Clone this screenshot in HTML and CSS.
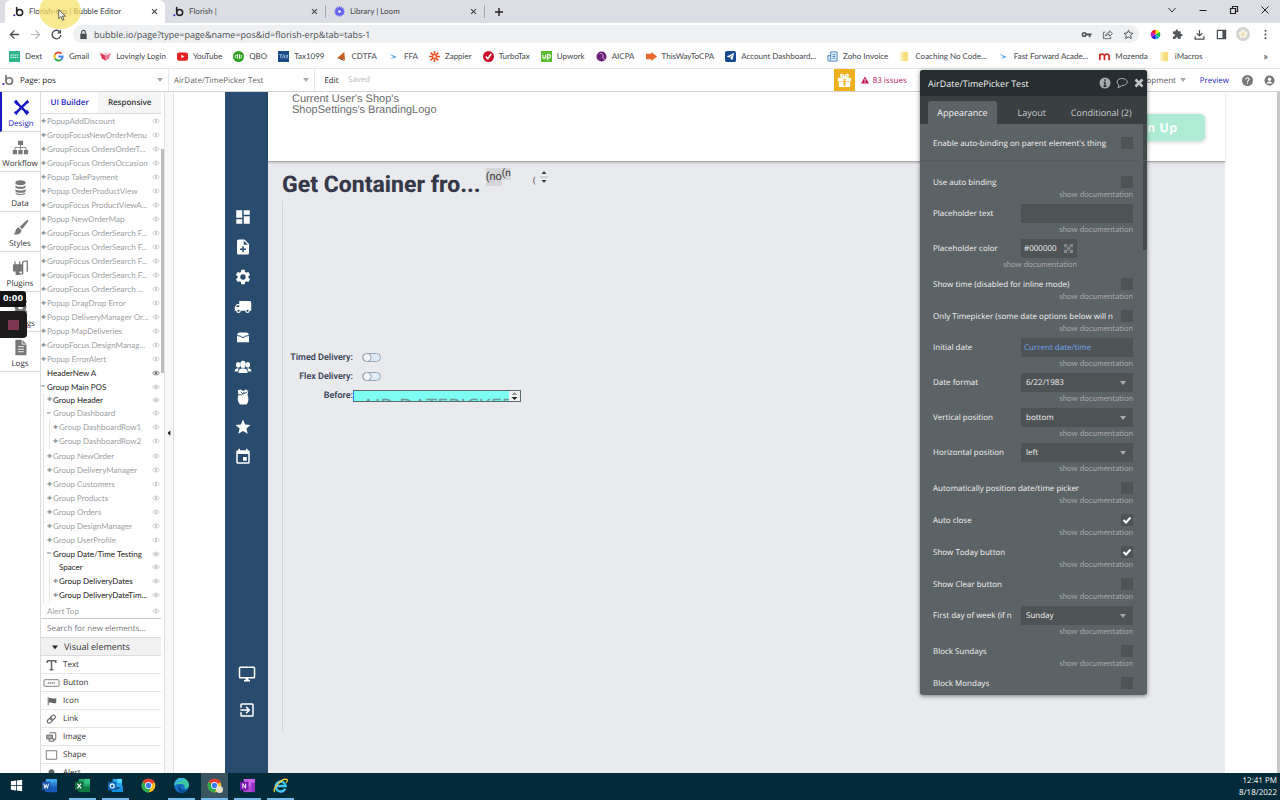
FILE: index.html
```html
<!DOCTYPE html>
<html lang="en">
<head>
    <meta charset="UTF-8">
    <meta name="viewport" content="width=device-width, initial-scale=1.0">
    <title>Florish-erp | Bubble Editor</title>
    <link rel="stylesheet" href="styles.css">
</head>
<body>
    <!-- Shared icons -->
    <svg class="sprite" aria-hidden="true">
        <symbol id="i-bubble" viewBox="0 0 24 24"><path d="M8 2v12" fill="none" stroke="currentColor" stroke-width="3.4"/><circle cx="14.500" cy="14" r="6.500" fill="none" stroke="currentColor" stroke-width="3.400"/><circle cx="3" cy="20" r="2.200" class="dot"/></symbol>
        <symbol id="i-x" viewBox="0 0 10 10"><path d="M1.500 1.500l7 7M8.500 1.500l-7 7" stroke="currentColor" stroke-width="1.600"/></symbol>
        <symbol id="i-eye" viewBox="0 0 16 12"><path d="M1 6c3-5 11-5 14 0-3 5-11 5-14 0z" fill="none" stroke="currentColor" stroke-width="1.500"/><circle cx="8" cy="6" r="3" fill="currentColor"/></symbol>
        <symbol id="i-hidden" viewBox="0 0 16 12"><path d="M1 6c3-5 11-5 14 0-3 5-11 5-14 0zM10 1L6 11" fill="none" stroke="currentColor" stroke-width="1.500"/><circle cx="8" cy="6" r="2" fill="currentColor"/></symbol>
        <symbol id="i-swoosh" viewBox="0 0 12 12"><path d="M1 3l9 3.500-8 2.500 4-2.500z" fill="#5aa9dc"/></symbol>
        <symbol id="i-folder" viewBox="0 0 12 12"><path d="M2 1h8v10H2z" fill="#f8dd7c"/><path d="M2 1h3v10H2z" fill="#fbe9a6"/></symbol>
        <symbol id="i-chrome" viewBox="0 0 24 24"><circle cx="12" cy="12" r="11" fill="#fbc116"/><path d="M12 12L2.500 6.500A11 11 0 0 1 21.500 6.500z" fill="#e33b2e"/><path d="M12 12L2.500 6.500A11 11 0 0 0 12 23l4-7z" fill="#2da94f"/><path d="M7 6.500h14.500L12 12z" fill="#e33b2e"/><circle cx="12" cy="12" r="5.500" fill="#fff"/><circle cx="12" cy="12" r="4.300" fill="#3b7de9"/></symbol>
    </svg>

    <div class="tabstrip">
        <div class="tab active">
            <svg class="tab-icon bubble"><use href="#i-bubble"/></svg>
            <span class="tab-title">Florish-erp | Bubble Editor</span>
            <button class="tab-close" aria-label="Close tab"><svg><use href="#i-x"/></svg></button>
        </div>
        <div class="tab">
            <svg class="tab-icon bubble"><use href="#i-bubble"/></svg>
            <span class="tab-title">Florish |</span>
            <button class="tab-close" aria-label="Close tab"><svg><use href="#i-x"/></svg></button>
        </div>
        <div class="tab divided">
            <svg class="tab-icon" viewBox="0 0 24 24"><g stroke="#625df5" stroke-width="4"><path d="M12 1v22M1 12h22M4.200 4.200l15.600 15.600M19.800 4.200L4.200 19.800M7.800 1.800l8.400 20.400M16.200 1.800L7.800 22.200M1.800 7.800l20.400 8.400M1.800 16.200l20.400-8.400" stroke-width="2.600"/></g><circle cx="12" cy="12" r="6.500" fill="#625df5"/><circle cx="12" cy="12" r="3.500" fill="#dcdee3"/></svg>
            <span class="tab-title">Library | Loom</span>
            <button class="tab-close" aria-label="Close tab"><svg><use href="#i-x"/></svg></button>
        </div>
        <button class="new-tab" aria-label="New tab"><svg viewBox="0 0 10 10"><path d="M5 1v8M1 5h8" stroke="#222" stroke-width="1.400"/></svg></button>
        <div class="window-controls">
            <button aria-label="Search tabs"><svg viewBox="0 0 10 10"><path d="M1.500 3L5 7l3.500-4" fill="none" stroke="#333"/></svg></button>
            <button aria-label="Minimize"><svg viewBox="0 0 10 10"><path d="M1.500 5.500h7" stroke="#222"/></svg></button>
            <button aria-label="Restore"><svg viewBox="0 0 10 10"><path d="M1.500 3.500h5v5h-5zM3.500 3V1.500h5v5H7" fill="none" stroke="#222" stroke-width="1.200"/></svg></button>
            <button aria-label="Close window"><svg viewBox="0 0 10 10"><path d="M1.500 1.500l7 7M8.500 1.500l-7 7" stroke="#222"/></svg></button>
        </div>
    </div>

    <div class="toolbar">
        <div class="nav-buttons">
            <button aria-label="Back"><svg viewBox="0 0 12 12"><path d="M11 6H2M6 1.500L1.500 6 6 10.500" fill="none" stroke="#4a4d51" stroke-width="1.400"/></svg></button>
            <button aria-label="Forward"><svg viewBox="0 0 12 12"><path d="M1 6h9M6 1.500L10.500 6 6 10.500" fill="none" stroke="#b4b7ba" stroke-width="1.300"/></svg></button>
            <button aria-label="Reload"><svg viewBox="0 0 12 12"><path d="M10 3.500A4.700 4.700 0 1 0 10.700 6.500" fill="none" stroke="#4a4d51" stroke-width="1.500"/><path d="M11 .5v4.500H6.500z" fill="#4a4d51"/></svg></button>
        </div>
        <div class="omnibox">
            <svg viewBox="0 0 12 12"><path d="M2.500 5h7v6h-7z" fill="#4a4d51"/><path d="M4 5V3.500a2 2 0 0 1 4 0V5" fill="none" stroke="#4a4d51" stroke-width="1.300"/></svg>
            <input class="url" type="text" aria-label="Address" value="bubble.io/page?type=page&amp;name=pos&amp;id=florish-erp&amp;tab=tabs-1">
            <button aria-label="Passwords"><svg viewBox="0 0 12 12"><circle cx="3.500" cy="6" r="2" fill="none" stroke="#4a4d51" stroke-width="1.600"/><path d="M5.500 5h6v1.800h-1.200V9H8.500V6.800h-3z" fill="#4a4d51"/></svg></button>
            <button aria-label="Share"><svg viewBox="0 0 12 12"><path d="M3.500 3.500H1.500v7h8V8.500M3.500 8c.5-3 2.500-4 4.500-4V2l3.500 3L8 8V6c-2 0-3.500.5-4.500 2z" fill="none" stroke="#5f6368"/></svg></button>
            <button aria-label="Bookmark"><svg viewBox="0 0 12 12"><path d="M6 1.200l1.400 3.200 3.500.3-2.600 2.300.8 3.400L6 8.600l-3.100 1.800.8-3.400L1.100 4.700l3.500-.3z" fill="none" stroke="#4a4d51"/></svg></button>
        </div>
        <div class="extensions">
            <button aria-label="Color picker"><svg viewBox="0 0 12 12"><path d="M6 6V.8A5.200 5.200 0 0 1 10.500 3.400z" fill="#ffe600"/><path d="M6 6l4.500-2.600a5.200 5.200 0 0 1 0 5.200z" fill="#15c13a"/><path d="M6 6l4.500 2.600A5.200 5.200 0 0 1 6 11.200z" fill="#12a6dc"/><path d="M6 6v5.200a5.200 5.200 0 0 1-4.500-2.600z" fill="#1b1be0"/><path d="M6 6L1.500 8.600a5.200 5.200 0 0 1 0-5.200z" fill="#d213c5"/><path d="M6 6L1.500 3.400A5.200 5.200 0 0 1 6 .8z" fill="#f01818"/></svg></button>
            <button aria-label="Extensions"><svg viewBox="0 0 24 24"><path d="M20.500 11H19V7c0-1.100-.9-2-2-2h-4V3.500a2.500 2.500 0 0 0-5 0V5H4c-1.100 0-2 .9-2 2v3.800h1.500a2.700 2.700 0 0 1 0 5.400H2V20c0 1.100.9 2 2 2h3.800v-1.500a2.700 2.700 0 0 1 5.400 0V22H17c1.100 0 2-.9 2-2v-4h1.500a2.500 2.500 0 0 0 0-5z" fill="#55585c"/></svg></button>
            <button aria-label="Downloads"><svg viewBox="0 0 12 12"><path d="M6 1v6M3 4.500L6 7.500l3-3M1.200 8v3h9.600V8" fill="none" stroke="#4a4d51" stroke-width="1.300"/></svg></button>
            <button aria-label="Side panel"><svg viewBox="0 0 12 12"><path d="M1.500 1.500h9v9h-9z" fill="none" stroke="#4a4d51" stroke-width="1.300"/><path d="M7 1.500h3.500v9H7z" fill="#4a4d51"/></svg></button>
            <button class="avatar" aria-label="Profile"><svg viewBox="0 0 14 14"><circle cx="7" cy="7" r="7" fill="#d3d3cf"/><g fill="#f5f2e2"><circle cx="7" cy="4.500" r="2"/><circle cx="4.500" cy="6.500" r="2"/><circle cx="9.500" cy="6.500" r="2"/><circle cx="5.500" cy="9" r="2"/><circle cx="8.500" cy="9" r="2"/></g><circle cx="7" cy="7" r="1.500" fill="#ead98c"/></svg></button>
            <button aria-label="Menu"><svg viewBox="0 0 12 12" fill="#4a4d51"><circle cx="6" cy="2" r="1.100"/><circle cx="6" cy="6" r="1.100"/><circle cx="6" cy="10" r="1.100"/></svg></button>
        </div>
    </div>

    <nav class="bookmarks">
        <a href="#"><svg viewBox="0 0 12 12"><path d="M0 0h12v12H0z" fill="#2cb68a"/><path d="M1.500 4.500h9M1.500 7h9" stroke="#d9f5ea" stroke-width="1.200" stroke-dasharray="1.500 .8"/></svg>Dext</a>
        <a href="#"><svg viewBox="0 0 12 12" fill="none" stroke-width="2"><path d="M9.500 3A4.500 4.500 0 0 0 2.200 3.800" stroke="#ea4335"/><path d="M2.200 3.800a4.500 4.500 0 0 0 0 4.400" stroke="#fbbc05"/><path d="M2.200 8.200A4.500 4.500 0 0 0 9 9.400" stroke="#34a853"/><path d="M9 9.400A4.500 4.500 0 0 0 10.500 6H6" stroke="#4285f4"/></svg>Gmail</a>
        <a href="#"><svg viewBox="0 0 12 12"><path d="M0 2l6 3v6L2 8z" fill="#e3355c"/><path d="M12 2L6 5v6l4-3z" fill="#f07a94"/><path d="M3 1l3 1.500L9 1 6 5z" fill="#f7b5c3"/></svg>Lovingly Login</a>
        <a href="#"><svg viewBox="0 0 12 12"><rect y="1.500" width="12" height="9" rx="2.400" fill="#e81f1f"/><path d="M4.700 4l3.500 2-3.500 2z" fill="#fff"/></svg>YouTube</a>
        <a href="#"><svg viewBox="0 0 12 12"><circle cx="6" cy="6" r="6" fill="#2ca01c"/><path d="M5 3.500v5M7 3.500v5M5 4.500H4a1.500 1.500 0 0 0 0 3M7 7.500h1a1.500 1.500 0 0 0 0-3" fill="none" stroke="#fff"/></svg>QBO</a>
        <a href="#"><svg viewBox="0 0 12 12"><path d="M0 0h12v12H0z" fill="#1b4a86"/><path d="M1.500 4h3M3 4v4M5 8l1.200-4L7.500 8M8.500 4L11 8M11 4L8.500 8" stroke="#9fc0e6" fill="none"/></svg>Tax1099</a>
        <a href="#"><svg viewBox="0 0 12 12"><path d="M1 8l8-7 1 10-3-3z" fill="#c8601f"/><path d="M2 8l5 0 2 3z" fill="#7d2e12"/></svg>CDTFA</a>
        <a href="#"><svg><use href="#i-swoosh"/></svg>FFA</a>
        <a href="#"><svg viewBox="0 0 12 12"><path d="M6 0v12M0 6h12M1.800 1.800l8.400 8.400M10.200 1.800l-8.400 8.400" stroke="#f04e23" stroke-width="1.800"/><circle cx="6" cy="6" r="1.300" fill="#fff"/></svg>Zappier</a>
        <a href="#"><svg viewBox="0 0 12 12"><circle cx="6" cy="6" r="6" fill="#c8102e"/><path d="M3 6l2.300 2.500L9 3" fill="none" stroke="#fff" stroke-width="1.700"/></svg>TurboTax</a>
        <a href="#"><svg viewBox="0 0 12 12"><path d="M0 0h12v12H0z" fill="#5bbc2f"/><path d="M2 4v2.500a1.500 1.500 0 0 0 3 0V4M7 10V4h1.500a1.500 1.500 0 0 1 0 3.500H7" fill="none" stroke="#fff" stroke-width="1.200"/></svg>Upwork</a>
        <a href="#"><svg viewBox="0 0 12 12"><circle cx="6" cy="6" r="5.500" fill="#6d2077"/><path d="M4 3c3-1 5 2 3 4M7 7l4 3.500" fill="none" stroke="#d7b6dd"/></svg>AICPA</a>
        <a href="#"><svg viewBox="0 0 12 12"><path d="M0 3h6V1l6 5-6 5V9H0z" fill="#e8692b"/></svg>ThisWayToCPA</a>
        <a href="#"><svg viewBox="0 0 12 12"><rect width="12" height="12" rx="2" fill="#174a8f"/><path d="M2 6l8-4-2 8-2.500-2.500L9 3.500 4.500 7z" fill="#fff"/></svg>Account Dashboard...</a>
        <a href="#"><svg viewBox="0 0 12 12"><path d="M4 1h7v10H2a1 1 0 0 1-1-1V5h3z" fill="#e3effa" stroke="#3b7dc0"/><path d="M4 5v5M6 4h3M6 6h3M6 8h3" stroke="#3b7dc0"/></svg>Zoho Invoice</a>
        <a href="#"><svg><use href="#i-folder"/></svg>Coaching No Code...</a>
        <a href="#"><svg><use href="#i-swoosh"/></svg>Fast Forward Acade...</a>
        <a href="#"><svg viewBox="0 0 12 12"><path d="M1 10V3M1 6q0-2.500 2.500-2.500T6 6v4M6 6q0-2.500 2.500-2.500T11 6v4" fill="none" stroke="#cf2f27" stroke-width="1.900"/></svg>Mozenda</a>
        <a href="#"><svg><use href="#i-folder"/></svg>iMacros</a>
        <button class="more" aria-label="More bookmarks">»</button>
    </nav>

    <header class="editor-bar">
        <div class="page-picker">
            <svg class="logo"><use href="#i-bubble"/></svg>
            <select aria-label="Page"><option>Page: pos</option></select>
        </div>
        <div class="element-picker">
            <select aria-label="Element"><option>AirDate/TimePicker Test</option></select>
        </div>
        <button class="edit">Edit</button>
        <span class="saved">Saved</span>
        <button class="gift" aria-label="What's new"><svg viewBox="0 0 16 16" fill="#fff"><path d="M1 5h14v4H1zM2 9.500h12V15H2z"/><path d="M8 5C4 5 3 1.500 5 1.500S8 5 8 5s1-3.500 3-3.500S12 5 8 5z" fill="none" stroke="#fff" stroke-width="1.500"/><path d="M7 6h2v8H7z" fill="#efb020"/></svg></button>
        <a class="issues" href="#"><svg viewBox="0 0 10 10"><path d="M5 .5L10 9.500H0z" fill="#c2185b"/><path d="M5 3.500v3M5 7.200v1.200" stroke="#fff" stroke-width="1.200"/></svg>83 issues</a>
        <div class="editor-right">
            <select class="version" aria-label="Version"><option>Development</option></select>
            <a class="preview" href="#">Preview</a>
            <button aria-label="Help"><svg viewBox="0 0 12 12"><circle cx="6" cy="6" r="6" fill="#777"/><path d="M4.200 4.800c0-2.400 3.700-2.300 3.600-.2C7.800 6 6 5.800 6 7.300M6 8.200v1.300" fill="none" stroke="#fff" stroke-width="1.200"/></svg></button>
            <button aria-label="Account"><svg viewBox="0 0 12 12"><circle cx="6" cy="6" r="5.500" fill="#777"/><circle cx="6" cy="4.600" r="1.900" fill="#fff"/><path d="M2.800 9.300c.5-2.800 5.900-2.800 6.400 0z" fill="#fff"/></svg></button>
        </div>
    </header>

    <main class="workspace">
        <nav class="side-nav">
            <a class="current" href="#"><svg viewBox="0 0 20 20"><path d="M3 3l14 14M17 3L3 17" stroke="currentColor" stroke-width="3"/><path d="M1 3l3-2 3 4-3 2zM13 15l4-2 2 3-3 3zM1 16l3 3 2-3-3-2zM14 4l3-3 2 3-3 2z" fill="currentColor"/></svg>Design</a>
            <a href="#"><svg viewBox="0 0 20 20"><path d="M7 2h6v5H7zM1 13h5v5H1zM7.500 13h5v5h-5zM14 13h5v5h-5z" fill="currentColor"/><path d="M10 7v6M3.500 13v-3h13v3" fill="none" stroke="currentColor"/></svg>Workflow</a>
            <a href="#"><svg viewBox="0 0 20 20" fill="currentColor"><path d="M4 4c0-3.500 12-3.500 12 0v1c0 3-12 3-12 0zM4 7.500c2 2 10 2 12 0v2c0 3-12 3-12 0zM4 12c2 2 10 2 12 0v2c0 3-12 3-12 0zM4 16c2 2 10 2 12 0v.5c0 3-12 3-12 0z"/></svg>Data</a>
            <a href="#"><svg viewBox="0 0 20 20" fill="currentColor"><path d="M18 1c1 0 1.500 1 1 2l-7 9-3-3zM8 10l3.200 3.200C11 17 7 19 2 18c2-1 1.500-2.500 2.500-5C5.200 11 6.500 10 8 10z"/></svg>Styles</a>
            <a href="#"><svg viewBox="0 0 20 20"><path d="M2 7h9v7H2zM3.500 3v4M9 3v4M5 14h3v4H5z" fill="currentColor" stroke="currentColor" stroke-width="1.500"/><path d="M6.500 17.500h6V5q0-2.500 3-2.500H18v12.500" fill="none" stroke="currentColor" stroke-width="1.500"/></svg>Plugins</a>
            <a href="#"><svg viewBox="0 0 20 20"><circle cx="10" cy="9" r="5" fill="none" stroke="currentColor" stroke-width="4"/><path d="M3 2l3 3M17 2l-3 3M3 16l3-3M17 16l-3-3" stroke="currentColor" stroke-width="3"/></svg>Settings</a>
            <a href="#"><svg viewBox="0 0 20 20"><path d="M4 1h8l5 5v13H4z" fill="currentColor"/><path d="M12 1v5h5M7 9h7M7 12h7M7 15h7" fill="none" stroke="#fff"/></svg>Logs</a>
        </nav>

        <aside class="elements">
            <div class="mode-tabs">
                <button class="on">UI Builder</button>
                <button>Responsive</button>
            </div>
            <ul class="tree">
                <li><div class="node"><i>✚</i><span>PopupAddDiscount</span><svg><use href="#i-hidden"/></svg></div></li>
                <li><div class="node"><i>✚</i><span>GroupFocusNewOrderMenu</span><svg><use href="#i-hidden"/></svg></div></li>
                <li><div class="node"><i>✚</i><span>GroupFocus OrdersOrderT...</span><svg><use href="#i-hidden"/></svg></div></li>
                <li><div class="node"><i>✚</i><span>GroupFocus OrdersOccasion</span><svg><use href="#i-hidden"/></svg></div></li>
                <li><div class="node"><i>✚</i><span>Popup TakePayment</span><svg><use href="#i-hidden"/></svg></div></li>
                <li><div class="node"><i>✚</i><span>Popup OrderProductView</span><svg><use href="#i-hidden"/></svg></div></li>
                <li><div class="node"><i>✚</i><span>GroupFocus ProductViewA...</span><svg><use href="#i-hidden"/></svg></div></li>
                <li><div class="node"><i>✚</i><span>Popup NewOrderMap</span><svg><use href="#i-hidden"/></svg></div></li>
                <li><div class="node"><i>✚</i><span>GroupFocus OrderSearch F...</span><svg><use href="#i-hidden"/></svg></div></li>
                <li><div class="node"><i>✚</i><span>GroupFocus OrderSearch F...</span><svg><use href="#i-hidden"/></svg></div></li>
                <li><div class="node"><i>✚</i><span>GroupFocus OrderSearch F...</span><svg><use href="#i-hidden"/></svg></div></li>
                <li><div class="node"><i>✚</i><span>GroupFocus OrderSearch F...</span><svg><use href="#i-hidden"/></svg></div></li>
                <li><div class="node"><i>✚</i><span>GroupFocus OrderSearch ...</span><svg><use href="#i-hidden"/></svg></div></li>
                <li><div class="node"><i>✚</i><span>Popup DragDrop Error</span><svg><use href="#i-hidden"/></svg></div></li>
                <li><div class="node"><i>✚</i><span>Popup DeliveryManager Or...</span><svg><use href="#i-hidden"/></svg></div></li>
                <li><div class="node"><i>✚</i><span>Popup MapDeliveries</span><svg><use href="#i-hidden"/></svg></div></li>
                <li><div class="node"><i>✚</i><span>GroupFocus DesignManag...</span><svg><use href="#i-hidden"/></svg></div></li>
                <li><div class="node"><i>✚</i><span>Popup ErrorAlert</span><svg><use href="#i-hidden"/></svg></div></li>
                <li><div class="node shown header-node"><i></i><span>HeaderNew A</span><svg><use href="#i-eye"/></svg></div></li>
                <li>
                    <div class="node shown"><i>━</i><span>Group Main POS</span><svg><use href="#i-eye"/></svg></div>
                    <ul>
                        <li><div class="node shown"><i>✚</i><span>Group Header</span><svg><use href="#i-eye"/></svg></div></li>
                        <li>
                            <div class="node"><i>━</i><span>Group Dashboard</span><svg><use href="#i-hidden"/></svg></div>
                            <ul>
                                <li><div class="node"><i>✚</i><span>Group DashboardRow1</span><svg><use href="#i-hidden"/></svg></div></li>
                                <li><div class="node"><i>✚</i><span>Group DashboardRow2</span><svg><use href="#i-hidden"/></svg></div></li>
                            </ul>
                        </li>
                        <li><div class="node"><i>✚</i><span>Group NewOrder</span><svg><use href="#i-hidden"/></svg></div></li>
                        <li><div class="node"><i>✚</i><span>Group DeliveryManager</span><svg><use href="#i-hidden"/></svg></div></li>
                        <li><div class="node"><i>✚</i><span>Group Customers</span><svg><use href="#i-hidden"/></svg></div></li>
                        <li><div class="node"><i>✚</i><span>Group Products</span><svg><use href="#i-hidden"/></svg></div></li>
                        <li><div class="node"><i>✚</i><span>Group Orders</span><svg><use href="#i-hidden"/></svg></div></li>
                        <li><div class="node"><i>✚</i><span>Group DesignManager</span><svg><use href="#i-hidden"/></svg></div></li>
                        <li><div class="node"><i>✚</i><span>Group UserProfile</span><svg><use href="#i-hidden"/></svg></div></li>
                        <li>
                            <div class="node shown"><i>━</i><span>Group Date/Time Testing</span><svg><use href="#i-eye"/></svg></div>
                            <ul>
                                <li><div class="node shown"><i></i><span>Spacer</span><svg><use href="#i-eye"/></svg></div></li>
                                <li><div class="node shown"><i>✚</i><span>Group DeliveryDates</span><svg><use href="#i-eye"/></svg></div></li>
                                <li><div class="node shown"><i>✚</i><span>Group DeliveryDateTim...</span><svg><use href="#i-eye"/></svg></div></li>
                            </ul>
                        </li>
                    </ul>
                </li>
                <li><div class="node"><i></i><span>Alert Top</span><svg><use href="#i-hidden"/></svg></div></li>
            </ul>
            <input class="search" type="text" aria-label="Search for new elements" placeholder="Search for new elements...">
            <button class="group-title"><svg viewBox="0 0 8 8"><path d="M0 2h8L4 7z" fill="#222"/></svg>Visual elements</button>
            <ul class="palette">
                <li><svg viewBox="0 0 18 12"><path d="M4.500 1.500h9v2.500M4.500 4V1.500M9 1.500v9.500M7 11h4" fill="none" stroke="#666" stroke-width="1.600"/></svg>Text</li>
                <li><svg viewBox="0 0 18 12"><rect x="1" y="2.500" width="16" height="7" rx="1" fill="none" stroke="#777"/><path d="M5 6h8" stroke="#888" stroke-width="1.500" stroke-dasharray="1.500 .5"/></svg>Button</li>
                <li><svg viewBox="0 0 18 12"><path d="M5.500 2v8.500" stroke="#666"/><path d="M6 3c2-1 4 1 8 0v5c-4 1-6-1-8 0z" fill="#666"/></svg>Icon</li>
                <li><svg viewBox="0 0 18 12"><g fill="none" stroke="#666" stroke-width="1.200" transform="rotate(-45 9 6)"><rect x="3.500" y="4" width="6" height="4" rx="2"/><rect x="8" y="4" width="6" height="4" rx="2"/></g></svg>Link</li>
                <li><svg viewBox="0 0 18 12"><path d="M7 1.500h6.500V8L11 10.500H6.500V8M11 10.500V8h2.500" fill="none" stroke="#666"/><path d="M4 4h6v4H4z" fill="#aaa" stroke="#666"/></svg>Image</li>
                <li><svg viewBox="0 0 18 12"><path d="M3.500 1.500h11v9h-11z" fill="none" stroke="#777"/></svg>Shape</li>
                <li><svg viewBox="0 0 18 12"><path d="M6 10V5a3 3 0 0 1 6 0v5z" fill="#666"/></svg>Alert</li>
            </ul>
        </aside>
        <div class="tree-scroll"></div>
        <button class="collapse" aria-label="Collapse panel"><svg viewBox="0 0 6 8"><path d="M5 0v8L1 4z" fill="#111"/></svg></button>

        <section class="canvas">
            <nav class="app-nav">
                <a href="#" aria-label="Dashboard"><svg viewBox="0 0 24 24"><path d="M3 13h8V3H3zm0 8h8v-6H3zm10 0h8V11h-8zm0-18v6h8V3z"/></svg></a>
                <a href="#" aria-label="New order"><svg viewBox="0 0 24 24"><path d="M14 2H6a2 2 0 0 0-2 2v16a2 2 0 0 0 2 2h12a2 2 0 0 0 2-2V8zm2 14h-3v3h-2v-3H8v-2h3v-3h2v3h3zm-3-7V3.500L18.500 9z"/></svg></a>
                <a href="#" aria-label="Settings"><svg viewBox="0 0 24 24"><path d="M19.140 12.940c.04-.3.06-.61.06-.94s-.02-.64-.07-.94l2.030-1.580a.49.49 0 0 0 .12-.61l-1.920-3.320a.49.49 0 0 0-.59-.22l-2.390.96a7 7 0 0 0-1.620-.94l-.36-2.540a.48.48 0 0 0-.48-.41h-3.840a.48.48 0 0 0-.47.41l-.36 2.540a7.200 7.200 0 0 0-1.620.94l-2.390-.96a.48.48 0 0 0-.59.22L2.740 8.870a.48.48 0 0 0 .12.61l2.030 1.580a6 6 0 0 0 0 1.880l-2.030 1.580a.49.49 0 0 0-.12.610l1.920 3.320c.12.22.37.29.59.22l2.390-.96c.5.38 1.030.7 1.620.94l.36 2.540c.05.24.24.41.48.41h3.840c.24 0 .44-.17.47-.41l.36-2.540a7 7 0 0 0 1.620-.94l2.390.96c.22.08.47 0 .59-.22l1.920-3.320a.48.48 0 0 0-.12-.61zM12 15.600a3.600 3.600 0 1 1 0-7.200 3.600 3.600 0 0 1 0 7.200z"/></svg></a>
                <a href="#" aria-label="Deliveries"><svg viewBox="0 0 24 24"><g transform="translate(24 0) scale(-1 1)"><path d="M20 8h-3V4H3a2 2 0 0 0-2 2v11h2a3 3 0 0 0 6 0h6a3 3 0 0 0 6 0h2v-5zM6 18.500a1.500 1.500 0 1 1 0-3 1.500 1.500 0 0 1 0 3zm13.500-9l1.960 2.500H17V9.500zM18 18.500a1.500 1.500 0 1 1 0-3 1.500 1.500 0 0 1 0 3z"/></g></svg></a>
                <a href="#" aria-label="Messages"><svg viewBox="0 0 24 24"><path d="M4 9q1-3 4-3h8q3 0 4 3v10H4z"/><path d="M4 10l5 1 3 2 3-2 5-1" fill="none" stroke="#294b6d" stroke-width="1.300"/></svg></a>
                <a href="#" aria-label="Customers"><svg viewBox="0 0 24 24"><ellipse cx="12" cy="8.500" rx="3.700" ry="4.700"/><ellipse cx="5.500" cy="9" rx="2.800" ry="3.800"/><ellipse cx="18.500" cy="9" rx="2.800" ry="3.800"/><path d="M6 20v-3q0-2 4-3h4q4 1 4 3v3zM1 18v-2q0-2 4-2.500l1.500.5Q5 15 5 18zM23 18v-2q0-2-4-2.500l-1.500.5q1.500 1 1.500 4z"/></svg></a>
                <a href="#" aria-label="Products"><svg viewBox="0 0 24 24"><path d="M5 3l4-1 3 2 4-2 3 2-1 5H6zM6 9h12q3 7-1 13H8Q3 16 6 9z"/><path d="M6 9q5 2 8-4M9 5l3 3 6-3" fill="none" stroke="#294b6d" stroke-width="1.200"/></svg></a>
                <a href="#" aria-label="Favorites"><svg viewBox="0 0 24 24"><path d="M12 17.300L18.200 21l-1.600-7L22 9.200l-7.200-.6L12 2 9.200 8.600 2 9.200 7.500 14l-1.700 7z"/></svg></a>
                <a href="#" aria-label="Calendar"><svg viewBox="0 0 24 24"><path d="M17 12h-5v5h5zM16 1v2H8V1H6v2H5a2 2 0 0 0-2 2v14a2 2 0 0 0 2 2h14a2 2 0 0 0 2-2V5a2 2 0 0 0-2-2h-1V1zm3 18H5V8h14z"/></svg></a>
                <a class="lower" href="#" aria-label="Display"><svg viewBox="0 0 24 24"><path d="M21 2H3a2 2 0 0 0-2 2v12a2 2 0 0 0 2 2h7v2H8v2h8v-2h-2v-2h7a2 2 0 0 0 2-2V4a2 2 0 0 0-2-2zm0 14H3V4h18z"/></svg></a>
                <a href="#" aria-label="Log out"><svg viewBox="0 0 24 24"><path d="M10.100 15.600L11.500 17l5-5-5-5-1.400 1.400 2.600 2.600H3v2h9.700zM19 3H5a2 2 0 0 0-2 2v4h2V5h14v14H5v-4H3v4a2 2 0 0 0 2 2h14a2 2 0 0 0 2-2V5a2 2 0 0 0-2-2z"/></svg></a>
            </nav>
            <div class="page">
                <div class="page-header">
                    <p>Current User's Shop's<br>ShopSettings's BrandingLogo</p>
                    <button class="sign-up">Sign Up</button>
                </div>
                <div class="title-row">
                    <h1>Get Container fro...</h1>
                    <span class="chip">(no</span><span class="chip small">(n</span>
                    <span class="brace">(</span>
                    <svg viewBox="0 0 10 16"><path d="M2.500 5L5 2l2.500 3zM2.500 11L5 14l2.500-3z" fill="#444"/><path d="M1 8h8" stroke="#bbb"/></svg>
                </div>
                <div class="date-group">
                    <label for="timed">Timed Delivery:</label>
                    <input class="toggle" type="checkbox" id="timed">
                    <label for="flex">Flex Delivery:</label>
                    <input class="toggle" type="checkbox" id="flex">
                    <label for="before">Before:</label>
                    <div class="picker">
                        <input type="text" id="before" value="AIR-DATEPICKER">
                        <svg viewBox="0 0 10 10"><path d="M2 4l3-3 3 3z" fill="#999"/><path d="M2 6h6L5 9z" fill="#222"/></svg>
                    </div>
                </div>
            </div>
        </section>
        <div class="canvas-scroll"></div>
    </main>

    <!-- Property editor, floats over the canvas -->
    <section class="inspector">
        <div class="inspector-head">
            <h2>AirDate/TimePicker Test</h2>
            <button aria-label="Info"><svg viewBox="0 0 12 12"><circle cx="6" cy="6" r="5.500" fill="#a9acad"/><path d="M6 2.300v1.700M4.700 5.500H6v3.500M4.500 9.300h3" fill="none" stroke="#272e31" stroke-width="1.400"/></svg></button>
            <button aria-label="Comment"><svg viewBox="0 0 12 12"><path d="M6 1.500c7 0 7 7 0 7L2 11l1-3C-.5 6 1 1.500 6 1.500z" fill="none" stroke="#a9acad"/></svg></button>
            <button aria-label="Close"><svg viewBox="0 0 12 12"><path d="M2.500 2.500l7 7M9.500 2.500l-7 7" stroke="#c2c4c5" stroke-width="2.600"/></svg></button>
        </div>
        <div class="inspector-tabs">
            <button class="on">Appearance</button>
            <button>Layout</button>
            <button>Conditional (2)</button>
        </div>
        <div class="inspector-body">
            <div class="field check binding"><label for="f0">Enable auto-binding on parent element's thing</label><input type="checkbox" id="f0"></div>
            <div class="field check"><label for="f1">Use auto binding</label><input type="checkbox" id="f1"><a href="#">show documentation</a></div>
            <div class="field"><label for="f2">Placeholder text</label><input type="text" id="f2"><a href="#">show documentation</a></div>
            <div class="field color"><label for="f3">Placeholder color</label><div class="swatch"><input type="text" id="f3" value="#000000"><svg viewBox="0 0 9 9"><path d="M0 0h9v9H0z" fill="#858889"/><path d="M3 0h3v3H3zM0 3h3v3H0zM6 3h3v3H6zM3 6h3v3H3z" fill="#5b5e60"/></svg></div><a href="#">show documentation</a></div>
            <div class="field check"><label for="f4">Show time (disabled for inline mode)</label><input type="checkbox" id="f4"><a href="#">show documentation</a></div>
            <div class="field check"><label for="f5">Only Timepicker (some date options below will n</label><input type="checkbox" id="f5"><a href="#">show documentation</a></div>
            <div class="field"><label for="f6">Initial date</label><input class="expression" type="text" id="f6" value="Current date/time"><a href="#">show documentation</a></div>
            <div class="field"><label for="f7">Date format</label><select id="f7"><option>6/22/1983</option></select><a href="#">show documentation</a></div>
            <div class="field"><label for="f8">Vertical position</label><select id="f8"><option>bottom</option></select><a href="#">show documentation</a></div>
            <div class="field"><label for="f9">Horizontal position</label><select id="f9"><option>left</option></select><a href="#">show documentation</a></div>
            <div class="field check"><label for="f10">Automatically position date/time picker</label><input type="checkbox" id="f10"><a href="#">show documentation</a></div>
            <div class="field check"><label for="f11">Auto close</label><input type="checkbox" id="f11" checked><a href="#">show documentation</a></div>
            <div class="field check"><label for="f12">Show Today button</label><input type="checkbox" id="f12" checked><a href="#">show documentation</a></div>
            <div class="field check"><label for="f13">Show Clear button</label><input type="checkbox" id="f13"><a href="#">show documentation</a></div>
            <div class="field"><label for="f14">First day of week (if n</label><select id="f14"><option>Sunday</option></select><a href="#">show documentation</a></div>
            <div class="field check"><label for="f15">Block Sundays</label><input type="checkbox" id="f15"><a href="#">show documentation</a></div>
            <div class="field check"><label for="f16">Block Mondays</label><input type="checkbox" id="f16"></div>
        </div>
    </section>

    <!-- Screen recorder controls -->
    <div class="recorder">
        <span class="timer">0:00</span>
        <button aria-label="Stop recording"><span></span></button>
    </div>
    <div class="pointer">
        <svg viewBox="0 0 12 16"><path d="M1 1v12l3-3 2 5 2-1-2-4.500h4z" fill="#fff" stroke="#333"/></svg>
    </div>

    <footer class="taskbar">
        <button aria-label="Start"><svg viewBox="0 0 16 16" fill="#fff"><path d="M2 3.500l5.500-.8v4.800H2zM8.300 2.600L14 1.800v5.700H8.300zM2 8.300h5.500v4.900L2 12.400zM8.300 8.300H14V14l-5.700-.8z"/></svg></button>
        <button aria-label="Word"><svg viewBox="0 0 16 16"><path d="M4 1h12v14H4z" fill="#41a5ee"/><path d="M4 5h12v10H4z" fill="#2b7cd3"/><path d="M4 9h12v6H4z" fill="#185abd"/><path d="M0 4h9v9H0z" fill="#1b51a8"/><path d="M2 6l1.200 5L4.500 7l1.300 4L7 6" fill="none" stroke="#fff"/></svg></button>
        <button class="open" aria-label="Excel"><svg viewBox="0 0 16 16"><path d="M4 1h12v14H4z" fill="#21a366"/><path d="M10 1h6v5h-6z" fill="#33c481"/><path d="M4 9h12v6H4z" fill="#107c41"/><path d="M0 4h9v9H0z" fill="#0f6b39"/><path d="M2.500 6l4 5M6.500 6l-4 5" stroke="#fff" stroke-width="1.200"/></svg></button>
        <button class="open" aria-label="Outlook"><svg viewBox="0 0 16 16"><path d="M5 1h10v9H5z" fill="#28a8ea"/><path d="M10 1h5v4h-5z" fill="#50d9ff"/><path d="M4 8l6 4 6-4v7H4z" fill="#1490df"/><path d="M0 4h9v9H0z" fill="#0f64b8"/><circle cx="4.500" cy="8.500" r="2.200" fill="none" stroke="#fff" stroke-width="1.200"/></svg></button>
        <button aria-label="Chrome"><svg><use href="#i-chrome"/></svg></button>
        <button class="open" aria-label="Edge"><svg viewBox="0 0 16 16"><circle cx="8" cy="8" r="8" fill="#1470c4"/><path d="M0 8a8 8 0 0 1 16-.5c0 3-2.500 4-5 3.500 1-2 0-4.500-3-4.500C4 6.500 1 7 0 8z" fill="#3cc9a0"/><path d="M1 5q2-5 7-5 3 0 5 1.800Q6 2 1 8z" fill="#35b4dc"/><path d="M7.500 7.500C5 10 8 14 14 12.500 12 15.500 9 16 7 15.500 3 13 4 8 7.500 7.500z" fill="#0b4c98"/></svg></button>
        <button class="open focused" aria-label="Chrome, recording"><svg><use href="#i-chrome"/></svg><b></b></button>
        <button class="open" aria-label="OneNote"><svg viewBox="0 0 16 16"><path d="M4 1h12v14H4z" fill="#ca64ea"/><path d="M12 5h4v10h-4z" fill="#9332bf"/><path d="M4 9h8v6H4z" fill="#ae4bd5"/><path d="M0 4h9v9H0z" fill="#7719aa"/><path d="M3 11V6l3 5V6" fill="none" stroke="#fff"/></svg></button>
        <button class="open" aria-label="Internet Explorer"><svg viewBox="0 0 16 16"><path d="M13 11.500A5.300 5.300 0 1 1 13.500 8.500H4" fill="none" stroke="#45c5f4" stroke-width="2.600"/><path d="M2 15C-1 12 9 0 14.500 1.500 16 2 15 4 14 5" fill="none" stroke="#f6d23b" stroke-width="1.400"/></svg></button>
        <div class="clock"><span>12:41 PM</span><span>8/18/2022</span></div>
    </footer>
</body>
</html>
```
FILE: styles.css
```css
:root {
    --ink: #333;
    --muted: #9ca1a3;
    --line: #dcdcdc;
    --accent: #1b1bc4;
    --navy: #294b6d;
    --panel: #5c6366;
    --panel-field: #4e5355;
    --ui: "Open Sans", "Noto Sans", sans-serif;
    --narrow: Lato, "Open Sans", sans-serif;
}

* {
    box-sizing: border-box;
}

body {
    margin: 0;
    height: 100vh;
    display: flex;
    flex-direction: column;
    overflow: hidden;
    position: relative;
    background: #fff;
    color: var(--ink);
    font-family: var(--ui);
    font-size: 8px;
    text-rendering: geometricPrecision;
}

button, input, select {
    font: inherit;
    color: inherit;
    border: none;
    background: none;
    padding: 0;
    margin: 0;
    appearance: none;
    border-radius: 0;
    outline: none;
    text-rendering: inherit;
}

button {
    display: flex;
    align-items: center;
    justify-content: center;
}

a {
    color: inherit;
    text-decoration: none;
}

ul {
    list-style: none;
    margin: 0;
    padding: 0;
}

svg {
    display: block;
    flex: none;
}

.sprite {
    position: absolute;
    width: 0;
    height: 0;
}

select {
    background: url("data:image/svg+xml,%3Csvg xmlns='http://www.w3.org/2000/svg' viewBox='0 0 6 4'%3E%3Cpath d='M0 0h6L3 4z' fill='%23aaa'/%3E%3C/svg%3E") no-repeat right 5px center / 6px 4px;
}

/* Browser tabs */
.tabstrip {
    display: flex;
    height: 23px;
    flex: none;
    padding-left: 5px;
    background: #dcdee3;
    font-family: var(--narrow);
}

.tab {
    display: flex;
    align-items: center;
    width: 160px;
    padding: 0 7px 1px 8px;
    gap: 5px;
    color: #45484c;
}

.tab.active {
    background: #fff;
    border-radius: 6px 6px 0 0;
}

.tab.divided {
    border-left: 1px solid #a5a8ad;
    border-right: 1px solid #a5a8ad;
    border-image: linear-gradient(transparent 25%, #a5a8ad 25%, #a5a8ad 75%, transparent 75%) 1;
}

.tab-icon {
    width: 11px;
    height: 11px;
}

.bubble {
    color: #222;
}

.dot {
    fill: #2a1bd0;
}

.tab-title {
    flex: 1;
    white-space: nowrap;
}

.tab-close svg {
    width: 7px;
    height: 7px;
}

.new-tab {
    width: 27px;
}

.new-tab svg {
    width: 10px;
    height: 10px;
}

.window-controls {
    display: flex;
    margin-left: auto;
    height: 19px;
}

.window-controls button {
    width: 31px;
}

.window-controls svg {
    width: 10px;
    height: 10px;
}

/* Address bar */
.toolbar {
    display: flex;
    align-items: center;
    height: 22px;
    flex: none;
}

.nav-buttons {
    display: flex;
    padding-left: 4px;
    width: 73px;
}

.nav-buttons button {
    width: 21px;
}

.nav-buttons svg, .omnibox svg, .extensions svg {
    width: 11px;
    height: 11px;
}

.omnibox {
    flex: 1;
    display: flex;
    align-items: center;
    height: 18px;
    padding: 0 0 0 5px;
    border-radius: 9px;
    background: #eef0f2;
}

.omnibox button {
    width: 21px;
}

.url {
    flex: 1;
    padding-left: 5px;
    font-size: 9px;
    color: #4b4f54;
}

.extensions {
    display: flex;
    padding: 0 4px 0 5px;
}

.extensions button {
    width: 22px;
}

.extensions .avatar svg {
    width: 14px;
    height: 14px;
}

/* Bookmarks */
.bookmarks {
    display: flex;
    align-items: center;
    gap: 11px;
    height: 23px;
    flex: none;
    padding: 0 12px 1px 9px;
    white-space: nowrap;
    color: #43474b;
    font-family: var(--narrow);
}

.bookmarks a {
    display: flex;
    align-items: center;
    gap: 5px;
}

.bookmarks svg {
    width: 11px;
    height: 11px;
}

.more {
    margin-left: auto;
    font-size: 11px;
}

/* Editor bar */
.editor-bar {
    display: flex;
    align-items: stretch;
    height: 24px;
    flex: none;
    border-top: 1px solid #e6e6e6;
    border-bottom: 1px solid #d5d5d5;
}

.page-picker {
    display: flex;
    align-items: center;
    width: 169px;
    padding-left: 2px;
    border-right: 1px solid #e8e8e8;
}

.page-picker select {
    flex: 1;
    height: 100%;
    padding-left: 6px;
    color: #222;
}

.logo {
    width: 12px;
    height: 14px;
    color: #777;
}

.element-picker {
    display: flex;
    width: 146px;
    padding-left: 5px;
    border-right: 1px solid #e8e8e8;
    color: #666;
}

.element-picker select {
    flex: 1;
}

.edit {
    width: 33px;
    color: #222;
}

.saved {
    color: #bbb;
    line-height: 22px;
    flex: 1;
}

.gift {
    width: 21px;
    background: #efb020;
}

.gift svg {
    width: 15px;
    height: 15px;
}

.issues {
    display: flex;
    align-items: center;
    gap: 4px;
    padding-left: 6px;
    color: #c2185b;
}

.issues svg {
    width: 8px;
    height: 8px;
}

.editor-right {
    display: flex;
    align-items: center;
    padding-left: 219px;
}

.editor-right button {
    width: 22px;
}

.editor-right button svg {
    width: 11px;
    height: 11px;
}

.version {
    width: 62px;
    background-position: right 2px center;
    color: #555;
}

.preview {
    padding: 0 7px 0 12px;
    color: var(--accent);
}

/* Workspace */
.workspace {
    flex: 1;
    min-height: 0;
    display: flex;
}

.side-nav {
    width: 41px;
    flex: none;
    border-right: 1px solid var(--line);
}

.side-nav a {
    display: flex;
    flex-direction: column;
    align-items: center;
    height: 40px;
    padding-top: 7px;
    gap: 1px;
    border-bottom: 1px solid var(--line);
    color: #333;
    line-height: 14px;
}

.side-nav svg {
    width: 17px;
    height: 17px;
    color: #777;
}

.side-nav .current, .side-nav .current svg {
    color: var(--accent);
}

.side-nav .current {
    border-left: 2px solid var(--accent);
}

.elements {
    width: 120px;
    flex: none;
    display: flex;
    flex-direction: column;
    overflow: hidden;
}

.mode-tabs {
    display: flex;
    height: 22px;
    flex: none;
    border-bottom: 1px solid var(--line);
}

.mode-tabs button {
    flex: 1 0 auto;
    padding: 0 6px;
    background: #f5f5f5;
    font-weight: 600;
}

.mode-tabs .on {
    background: #fff;
    color: var(--accent);
}

.tree {
    flex: none;
    height: 505px;
    font-family: var(--narrow);
    border-bottom: 1px solid #ccc;
}

.tree ul {
    margin-left: 2px;
    padding: 0 0 1px 3px;
    border-left: 1px solid #e6e6e6;
}

.node {
    display: flex;
    align-items: center;
    height: 14px;
    padding-right: 1px;
    color: var(--muted);
}

.node i {
    width: 6px;
    font-style: normal;
    font-size: 6px;
    font-family: "DejaVu Sans", sans-serif;
    color: #8d9193;
}

.node span {
    flex: 1;
    white-space: nowrap;
}

.node svg {
    width: 8px;
    height: 6px;
    color: #c3c6c7;
}

.node.shown {
    height: 13px;
    color: #222;
}

.node.header-node, .tree ul ul .node {
    height: 14px;
}

.header-node svg {
    color: #777;
}

.search {
    height: 18px;
    flex: none;
    padding-left: 6px;
}

.search::placeholder {
    color: #777;
}

.group-title {
    justify-content: flex-start;
    height: 19px;
    flex: none;
    padding-left: 11px;
    gap: 6px;
    border-top: 1px solid var(--line);
    border-bottom: 1px solid var(--line);
    background: #f1f1f1;
    font-size: 9px;
}

.group-title svg {
    width: 6px;
    height: 6px;
}

.palette li {
    display: flex;
    align-items: center;
    gap: 3px;
    height: 18px;
    padding-left: 2px;
    border-bottom: 1px solid #e6e6e6;
}

.palette svg {
    width: 17px;
    height: 12px;
}

.tree-scroll {
    width: 3px;
    flex: none;
    margin-top: 57px;
    height: 224px;
    background: #bcbcbc;
}

.collapse {
    width: 10px;
    flex: none;
    border-left: 1px solid #e3e3e3;
    border-right: 1px solid #e0e0e0;
    background: #f7f7f7;
}

.collapse svg {
    width: 4px;
    height: 6px;
}

/* Canvas */
.canvas {
    flex: 1;
    display: flex;
    padding: 0 52px 0 51px;
}

.app-nav {
    width: 43px;
    flex: none;
    display: flex;
    flex-direction: column;
    align-items: center;
    padding: 110px 0 45px;
    background: var(--navy);
}

.app-nav a {
    display: flex;
    align-items: center;
    height: 30px;
    padding-right: 7px;
}

.app-nav svg {
    width: 18px;
    height: 18px;
    fill: #fff;
}

.app-nav .lower {
    margin-top: auto;
}

.app-nav .lower, .app-nav .lower + a {
    height: 36px;
    padding-right: 0;
}

.page {
    flex: 1;
    background: #e9eaee;
}

.page-header {
    display: flex;
    justify-content: space-between;
    align-items: flex-start;
    height: 70px;
    padding: 0 20px 0 24px;
    border-bottom: 1px solid #aaa;
    background: #fff;
    box-shadow: 0 1px 2px rgba(0, 0, 0, 0.2);
}

.page-header p {
    margin: 2px 0 0;
    font: 11px/11px "Liberation Sans", Arial, sans-serif;
    color: #6b6b6b;
}

.sign-up {
    width: 106px;
    height: 27px;
    margin-top: 22px;
    border-radius: 5px;
    background: #aeecd6;
    box-shadow: 0 1px 4px rgba(0, 0, 0, 0.2);
    color: #fff;
    font: 700 12px Inter, sans-serif;
    letter-spacing: 1px;
}

.title-row {
    display: flex;
    align-items: flex-start;
    height: 39px;
    padding: 6px 0 0 14px;
    color: #333;
    font-family: Roboto, sans-serif;
}

.title-row h1 {
    margin: 0;
    font-size: 23px;
    line-height: 33px;
    font-weight: 800;
    color: #36394a;
}

.chip {
    margin-left: 5px;
    background: #d5d5d8;
    font-size: 11px;
    line-height: 18px;
}

.chip.small {
    margin-left: 0;
    font-size: 10px;
    line-height: 12px;
}

.brace {
    margin-left: 22px;
    font-size: 8px;
    line-height: 26px;
}

.title-row svg {
    width: 10px;
    height: 16px;
    margin: 1px 0 0 4px;
}

.date-group {
    display: grid;
    grid-template-columns: 70px 168px;
    grid-auto-rows: 19px;
    align-items: center;
    height: 530px;
    align-content: start;
    margin-left: 14px;
    padding-top: 147px;
    border-left: 1px solid #d3d4d8;
    font: 600 10px Roboto, sans-serif;
    font-size: 9px;
    color: #3c4658;
}

.date-group label {
    text-align: right;
}

.toggle {
    width: 19px;
    height: 9px;
    margin-left: 9px;
    border: 1px solid #9aa6b5;
    border-radius: 5px;
    background: radial-gradient(circle at 4px 50%, #f5f7fa 3px, #9aa6b5 4px, #dfeaf7 5px);
}

.picker {
    display: flex;
    align-items: flex-start;
    height: 12px;
    overflow: hidden;
    border: 1px solid #5b6b70;
    border-left-color: #2c7be5;
    background: #7dfff3;
}

.picker input {
    flex: 1;
    min-width: 0;
    height: 30px;
    padding-left: 8px;
    font: 20px "Open Sans", sans-serif;
    color: #6f9c9b;
}

.picker svg {
    width: 11px;
    height: 10px;
    background: #f3f3f3;
}

.canvas-scroll {
    width: 3px;
    flex: none;
    background: #c8c8c8;
}

/* Property editor */
.inspector {
    position: absolute;
    top: 70px;
    right: 133px;
    width: 227px;
    height: 625px;
    display: flex;
    flex-direction: column;
    overflow: hidden;
    border-radius: 3px;
    background: var(--panel);
    box-shadow: 0 1px 4px rgba(0, 0, 0, 0.5);
    color: #f2f2f2;
}

.inspector-head {
    display: flex;
    align-items: center;
    height: 26px;
    flex: none;
    padding: 0 0 0 8px;
    background: #272e31;
}

.inspector-head h2 {
    flex: 1;
    margin: 0;
    font-size: 9px;
    font-weight: 400;
}

.inspector-head button {
    width: 17px;
}

.inspector-head svg {
    width: 12px;
    height: 12px;
}

.inspector-tabs {
    display: flex;
    height: 28px;
    flex: none;
    padding: 5px 11px 0 8px;
    background: #3a3f42;
    color: #c9cbcc;
    font-size: 9px;
}

.inspector-tabs button {
    flex: 1 1 0;
}

.inspector-tabs .on {
    flex: none;
    width: 69px;
    border-radius: 3px 3px 0 0;
    background: var(--panel);
    color: #f2f2f2;
}

.inspector-body {
    flex: 1;
    min-height: 0;
    overflow: hidden;
    padding: 0 14px 0 13px;
    background: linear-gradient(#454a4d, #454a4d) no-repeat right top / 4px 126px;
}

.field {
    display: grid;
    grid-template-columns: 88px 1fr;
    grid-template-rows: 19px 12px;
    align-items: center;
    padding-bottom: 4px;
}

.field label {
    overflow: hidden;
    white-space: nowrap;
    margin-right: 8px;
}

.field a {
    grid-column: 1 / -1;
    text-align: right;
    color: #a4a7a9;
    font-family: var(--narrow);
    line-height: 12px;
}

.field input[type="text"], .field select {
    width: 100%;
    height: 19px;
    padding-left: 3px;
    background-color: var(--panel-field);
}

.field select {
    padding-left: 5px;
    background-position: right 7px center;
}

.field .expression {
    color: #74a7ee;
}

.field.check {
    grid-template-columns: 1fr 12px;
    grid-template-rows: 12px 12px;
    padding-top: 4px;
}

.field input[type="checkbox"] {
    width: 12px;
    height: 12px;
    background: var(--panel-field);
}

.field input[type="checkbox"]:checked {
    background: var(--panel-field) url("data:image/svg+xml,%3Csvg xmlns='http://www.w3.org/2000/svg' viewBox='0 0 12 12'%3E%3Cpath d='M2.500 6l2.500 2.500L9.500 3.500' fill='none' stroke='white' stroke-width='2'/%3E%3C/svg%3E");
}

.field.binding {
    grid-template-rows: 12px;
    margin: 0 -14px 11px -13px;
    padding: 13px 14px 11px 13px;
    border-bottom: 1px solid #565c5f;
}

.field.color {
    grid-template-columns: 88px 56px;
}

.swatch {
    display: flex;
    align-items: center;
    padding-right: 4px;
    background: var(--panel-field);
}

.swatch input {
    flex: 1;
    min-width: 0;
}

.swatch svg {
    width: 9px;
    height: 9px;
}

/* Screen recorder */
.recorder {
    position: absolute;
    left: 0;
    top: 291px;
    display: flex;
    flex-direction: column;
    gap: 4px;
}

.timer {
    width: 26px;
    height: 16px;
    border-radius: 0 3px 3px 0;
    background: #151515;
    color: #fff;
    font: 700 8px/16px "DejaVu Sans", sans-serif;
    text-align: center;
}

.recorder button {
    width: 27px;
    height: 27px;
    border-radius: 0 4px 4px 0;
    background: #1d1b1c;
}

.recorder button span {
    width: 11px;
    height: 10px;
    background: #7d3550;
}

.pointer {
    position: absolute;
    left: 39px;
    top: -7px;
    width: 42px;
    height: 36px;
    border-radius: 50%;
    background: rgba(247, 224, 98, 0.7);
}

.pointer svg {
    width: 9px;
    height: 12px;
    margin: 16px 0 0 19px;
}

/* Taskbar */
.taskbar {
    display: flex;
    height: 27px;
    flex: none;
    padding: 0 3px 0 0;
    background: #032a38;
}

.taskbar button {
    position: relative;
    width: 27px;
    margin: 0 3px;
    border-bottom: 2px solid transparent;
}

.taskbar .open {
    border-bottom-color: #76b9ed;
}

.taskbar .focused {
    background: #3b5560;
}

.taskbar svg {
    width: 15px;
    height: 15px;
}

.taskbar b {
    position: absolute;
    right: 5px;
    bottom: 5px;
    width: 7px;
    height: 7px;
    border-radius: 50%;
    background: #e5e0cc;
}

.clock {
    display: flex;
    flex-direction: column;
    align-items: flex-end;
    justify-content: center;
    margin-left: auto;
    color: #fff;
    line-height: 12px;
}
```
